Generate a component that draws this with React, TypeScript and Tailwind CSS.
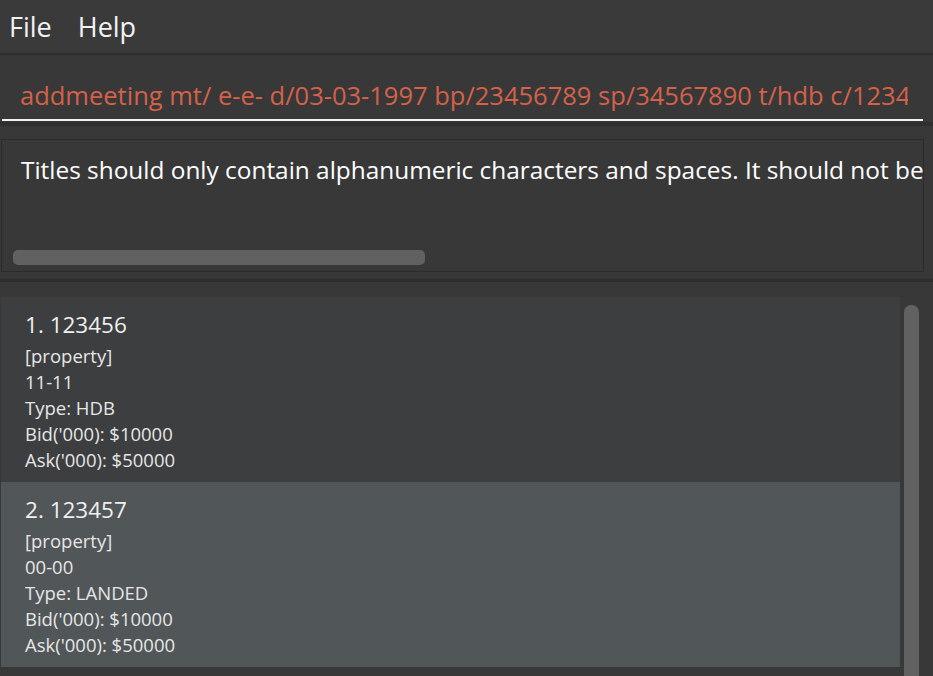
const font = { fontFamily: '"Open Sans", "Noto Sans", sans-serif' };

type Listing = {
  id: number;
  postal: string;
  unit: string;
  type: string;
  bid: string;
  ask: string;
};

const listings: Listing[] = [
  { id: 1, postal: '123456', unit: '11-11', type: 'HDB', bid: '$10000', ask: '$50000' },
  { id: 2, postal: '123457', unit: '00-00', type: 'LANDED', bid: '$10000', ask: '$50000' },
];

function ListingCard({ item, odd }: { item: Listing; odd: boolean }) {
  return (
    <div className={`h-[185px] pl-6 pt-[14px] text-[#f0f0f0] ${odd ? 'bg-[#515658]' : 'bg-[#3c3e3f]'}`}>
      <div className="text-[22.5px] leading-[28px]">
        {item.id}. {item.postal}
      </div>
      <div className="mt-[4px] text-[18.5px] leading-[26px] text-[#e6e6e6]">
        <div>[property]</div>
        <div>{item.unit}</div>
        <div>Type: {item.type}</div>
        <div>Bid('000): {item.bid}</div>
        <div>Ask('000): {item.ask}</div>
      </div>
    </div>
  );
}

export default function App() {
  return (
    <div className="w-[933px] h-[676px] overflow-hidden bg-[#383838] flex flex-col" style={font}>
      {/* Menu */}
      <div className="h-[55px] shrink-0 flex items-center gap-[26px] px-[9px] pt-[2px] text-[27px] text-[#f2f2f2] bg-[#3a3a3a] border-b-2 border-[#2e2e2e]">
        <span>File</span>
        <span>Help</span>
      </div>

      {/* Command box */}
      <div className="h-[67px] shrink-0 px-[2px] flex flex-col justify-end bg-[#383838]">
        <div className="h-[42px] mb-[3px] pl-[18px] overflow-hidden whitespace-nowrap text-[25.5px] leading-[42px] text-[#d4614a] w-[921px]">
          <span className="inline-block w-[888px] overflow-hidden align-top">
            addmeeting mt/ e-e- d/03-03-1997 bp/23456789 sp/34567890 t/hdb c/12345
          </span>
        </div>
        <div className="h-[2px] w-[921px] bg-[#f2f2f2] mb-[1px]" />
      </div>
      <div className="h-[4px] shrink-0 bg-[#2f2f2f]" />

      {/* Result display */}
      <div className="pt-[13px] px-[1px] pb-[7px] shrink-0">
        <div className="h-[133px] w-[923px] border border-[#2b2b2b] bg-[#383838] flex flex-col">
          <div className="flex-1 overflow-hidden whitespace-nowrap pl-[19px] pt-[12px] text-[24.4px] text-white">
            Titles should only contain alphanumeric characters and spaces. It should not be blank
          </div>
          <div className="h-[15px] mb-[6px] ml-[11px] w-[412px] rounded-[5px] bg-[#616161]" />
        </div>
      </div>
      <div className="h-[3px] shrink-0 bg-[#2e2e2e]" />

      {/* List */}
      <div className="flex-1 flex pt-[15px] min-h-0">
        <div className="w-[900px] pl-[1px] flex flex-col">
          {listings.map((l, i) => (
            <ListingCard key={l.id} item={l} odd={i % 2 === 1} />
          ))}
        </div>
        <div className="flex-1 pt-[8px] pl-[4px]">
          <div className="w-[15px] h-[400px] rounded-t-[7px] bg-[#616161]" />
        </div>
      </div>
    </div>
  );
}
